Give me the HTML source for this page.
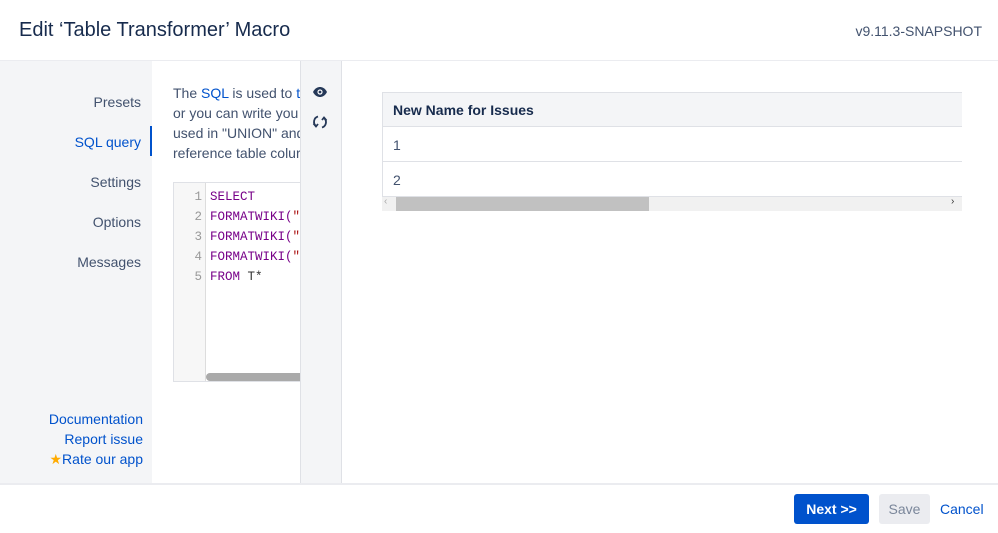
<!DOCTYPE html>
<html><head><style>
*{margin:0;padding:0;box-sizing:border-box}
body{width:998px;height:533px;overflow:hidden;font-family:"Liberation Sans",sans-serif;color:#172b4d;background:#fff;position:relative;font-size:14px}
.abs{position:absolute}
a{color:#0052cc;text-decoration:none}
.mono{font-family:"Liberation Mono",monospace;font-size:12.5px}
</style></head><body>
<div class="abs" style="left:19px;top:19px;font-size:20px;color:#172b4d">Edit ‘Table Transformer’ Macro</div>
<div class="abs" style="right:16px;top:23px;font-size:14px;color:#42526e">v9.11.3-SNAPSHOT</div>
<div class="abs" style="left:0;top:60px;width:998px;height:1px;background:#ebecf0"></div>
<!-- left nav -->
<div class="abs" style="left:0;top:61px;width:152px;height:422px;background:#f4f5f7"></div>
<div class="abs" style="left:0;top:82px;width:141px;text-align:right;color:#42526e;line-height:40px">
<div>Presets</div><div style="color:#0052cc">SQL query</div><div>Settings</div><div>Options</div><div>Messages</div></div>
<div class="abs" style="left:150px;top:126px;width:2px;height:30px;background:#0052cc"></div>
<div class="abs" style="left:0;top:409px;width:143px;text-align:right;line-height:20px">
<div><a>Documentation</a></div><div><a>Report issue</a></div><div><span style="color:#ffab00">★</span><a>Rate our app</a></div></div>
<!-- content -->
<div class="abs" style="left:152px;top:61px;width:148px;height:422px;overflow:hidden">
<div class="abs" style="left:21px;top:22px;width:300px;line-height:20px;color:#42526e;white-space:nowrap">The <a>SQL</a> is used to <a>tr</a><br>or you can write you<br>used in "UNION" and<br>reference table colur</div>
<div class="abs" style="left:21px;top:121px;width:140px;height:200px;border:1px solid #dfe1e6;background:#fff">
<div class="abs" style="left:0;top:0;width:32px;height:198px;background:#f7f7f7;border-right:1px solid #ddd"></div>
<div class="abs mono" style="left:0;top:4px;width:28px;text-align:right;color:#999;line-height:20px">1<br>2<br>3<br>4<br>5</div>
<div class="abs mono" style="left:36px;top:4px;color:#770088;line-height:20px;white-space:nowrap">SELECT<br>FORMATWIKI(<span style="color:#a11">"</span><br>FORMATWIKI(<span style="color:#a11">"</span><br>FORMATWIKI(<span style="color:#a11">"</span><br>FROM <span style="color:#333">T*</span></div>
<div class="abs" style="left:32px;top:190px;width:120px;height:8px;background:#aaa;border-radius:4px"></div>
</div></div>
<!-- icon column -->
<div class="abs" style="left:300px;top:61px;width:42px;height:422px;background:#f4f5f7;border-left:1px solid #dfe1e6;border-right:1px solid #dfe1e6"></div>
<svg class="abs" style="left:312px;top:86px" width="16" height="12" viewBox="0 0 16 12"><path d="M1 6C3 2 6 1 8 1s5 1 7 5c-2 4-5 5-7 5S3 10 1 6z" fill="#253858"/><circle cx="8" cy="6" r="2.6" fill="#fff"/><circle cx="8" cy="6" r="1.4" fill="#253858"/></svg>
<svg class="abs" style="left:312px;top:114px" width="16" height="16" viewBox="0 0 16 16" fill="none" stroke="#253858" stroke-width="1.8"><path d="M6 2.5A5.5 5.5 0 0 0 4 12"/><path d="M1.5 9.5L4 12.5 6 10"/><path d="M10 13.5A5.5 5.5 0 0 0 12 4"/><path d="M14.5 6.5L12 3.5 10 6"/></svg>
<!-- table -->
<div class="abs" style="left:382px;top:92px;width:580px;height:105px;border:1px solid #dfe1e6;border-right:none">
<div style="height:34px;background:#f4f5f7;border-bottom:1px solid #dfe1e6;padding:9px 10px;font-weight:bold;font-size:14px">New Name for Issues</div>
<div style="height:35px;border-bottom:1px solid #dfe1e6;padding:10px 10px;color:#42526e">1</div>
<div style="height:34px;padding:10px 10px;color:#42526e">2</div></div>
<div class="abs" style="left:382px;top:197px;width:580px;height:14px;background:#f1f1f1"></div>
<div class="abs" style="left:396px;top:197px;width:253px;height:14px;background:#c1c1c1"></div>
<div class="abs" style="left:384px;top:196px;font-size:10px;color:#aaa">‹</div>
<div class="abs" style="left:951px;top:196px;font-size:10px;color:#333">›</div>
<!-- footer -->
<div class="abs" style="left:0;top:483px;width:998px;height:2px;background:#ebecf0"></div>
<div class="abs" style="left:794px;top:494px;width:75px;height:30px;background:#0052cc;border-radius:3px;color:#fff;font-weight:bold;text-align:center;line-height:30px">Next &gt;&gt;</div>
<div class="abs" style="left:879px;top:494px;width:51px;height:30px;background:#ebecf0;border-radius:3px;color:#7a869a;text-align:center;line-height:30px">Save</div>
<div class="abs" style="left:940px;top:494px;line-height:30px;color:#0052cc">Cancel</div>
</body></html>
